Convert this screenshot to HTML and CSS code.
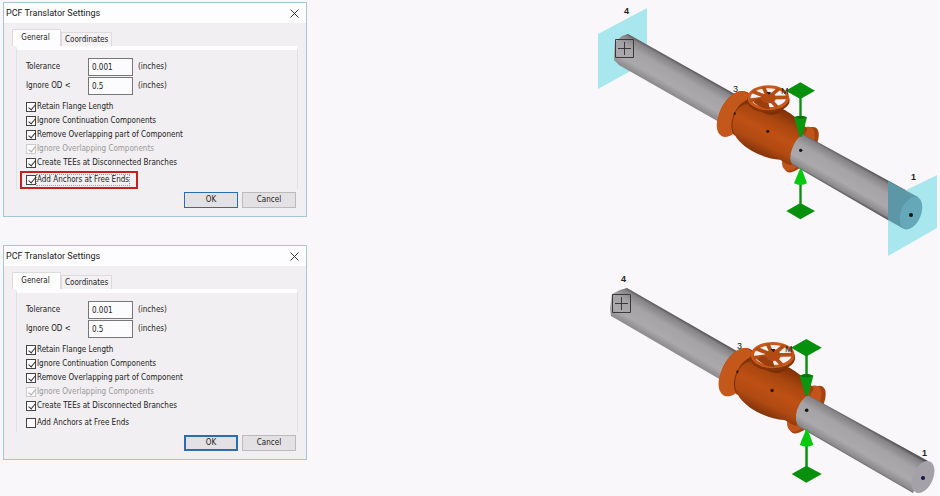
FILE: index.html
```html
<!DOCTYPE html>
<html lang="en">
<head>
    <meta charset="UTF-8">
    <meta name="viewport" content="width=device-width, initial-scale=1.0">
    <title>PCF Translator Settings</title>
    <link rel="stylesheet" href="styles.css">
</head>
<body>
    <!-- anchors on -->
    <section class="row">
        <form class="dialog">
            <header class="titlebar">
                <h2>PCF Translator Settings</h2>
                <button type="button" class="close" aria-label="Close">
                    <svg width="9" height="9" viewBox="0 0 9 9"><path d="M.5.5l8 8M8.500.5l-8 8"/></svg>
                </button>
            </header>
            <div class="tabs">
                <button type="button" class="tab active">General</button>
                <button type="button" class="tab">Coordinates</button>
            </div>
            <div class="panel">
                <div class="field">
                    <label for="tol1">Tolerance</label>
                    <input type="text" id="tol1" value="0.001">
                    <span>(inches)</span>
                </div>
                <div class="field">
                    <label for="od1">Ignore OD &lt;</label>
                    <input type="text" id="od1" value="0.5">
                    <span>(inches)</span>
                </div>
                <div class="checks">
                    <label><input type="checkbox" checked>Retain Flange Length</label>
                    <label><input type="checkbox" checked>Ignore Continuation Components</label>
                    <label><input type="checkbox" checked>Remove Overlapping part of Component</label>
                    <label class="off"><input type="checkbox" checked disabled>Ignore Overlapping Components</label>
                    <label><input type="checkbox" checked>Create TEEs at Disconnected Branches</label>
                    <label class="anchors marked"><input type="checkbox" checked><span>Add Anchors at Free Ends</span></label>
                </div>
            </div>
            <footer class="buttons">
                <button type="button" class="btn ok">OK</button>
                <button type="button" class="btn">Cancel</button>
            </footer>
        </form>

        <svg class="scene" width="350" height="243" viewBox="590 0 350 243">
            <defs>
                <linearGradient id="pipe1" gradientUnits="userSpaceOnUse" x1="628" y1="33" x2="611" y2="63">
                    <stop offset="0" stop-color="#4e4c4e"/>
                    <stop offset=".1" stop-color="#858385"/>
                    <stop offset=".35" stop-color="#a5a3a5"/>
                    <stop offset=".7" stop-color="#aba9ab"/>
                    <stop offset=".92" stop-color="#8c8a8c"/>
                    <stop offset="1" stop-color="#504e50"/>
                </linearGradient>
                <linearGradient id="pipe2" href="#pipe1" x1="627" y1="287" x2="609" y2="318"/>
                <linearGradient id="body" gradientUnits="userSpaceOnUse" x1="235" y1="110" x2="165" y2="255">
                    <stop offset="0" stop-color="#7d3008"/>
                    <stop offset=".25" stop-color="#a8460f"/>
                    <stop offset=".5" stop-color="#be5014"/>
                    <stop offset=".75" stop-color="#b04a12"/>
                    <stop offset="1" stop-color="#7a2f08"/>
                </linearGradient>
                <symbol id="valve" viewBox="0 0 420 480">
                    <!-- flanges -->
                    <ellipse cx="107" cy="128" rx="44" ry="71" transform="rotate(30 107 128)" fill="#a9430d"/>
                    <ellipse cx="100" cy="132" rx="40" ry="75" transform="rotate(28 100 132)" fill="#c3581a"/>
                    <ellipse cx="304" cy="239" rx="34" ry="79" transform="rotate(34 304 239)" fill="#a5430f"/>
                    <ellipse cx="295" cy="236" rx="34" ry="75" transform="rotate(32 295 236)" fill="#c0541a"/>
                    <path d="M102 196C90 175 92 150 104 128C114 107 126 96 145 88L165 130L125 200Z" fill="#823409"/>
                    <!-- body -->
                    <path d="M106 130C118 98 160 92 205 103C252 110 295 145 322 178L274 285C262 284 252 276 240 269C190 265 137 240 110 204C92 178 96 150 106 130Z" fill="url(#body)"/>
                    <!-- hand wheel -->
                    <path d="M170 110C180 128 225 132 248 112L240 127C220 140 190 136 170 110Z" fill="#7b2e07"/>
                    <ellipse cx="205" cy="91" rx="60" ry="33" fill="none" stroke="#853308" stroke-width="8"/>
                    <ellipse cx="205" cy="83" rx="58" ry="33" fill="#f6f1f0" stroke="#c9591b" stroke-width="9"/>
                    <path d="M205 83L190 51M205 83L238 55M205 83L262 82M205 83L232 112M205 83L183 112M205 83L150 91M205 83L157 64" stroke="#b44e17" stroke-width="11"/>
                    <path d="M160 96C180 112 196 118 210 117L205 98L175 84Z" fill="#9c3f0d"/>
                    <ellipse cx="206" cy="84" rx="22" ry="16" fill="#b34a13"/>
                    <path d="M199 66h14l-6 9zM103 126l5 3-3 7-5-3z" fill="#2d1b18"/>
                    <circle cx="203" cy="184" r="5" fill="#32180c"/>
                </symbol>
                <symbol id="support" viewBox="0 0 420 480">
                    <g fill="#07900c">
                        <path d="M257 62L301 37L345 62L301 87Z"/>
                        <path d="M259 423L301 399L345 423L301 448Z"/>
                        <path d="M298 75h7v70h-7zM298 338h7v70h-7z"/>
                    </g>
                    <path d="M282 142Q301 132 321 142L306 200H299Z" fill="#0b9612"/>
                    <path d="M282 142Q301 132 321 142Q302 152 282 142Z" fill="#067309"/>
                    <path d="M300 296H305L321 340Q302 350 282 340Z" fill="#05c90e"/>
                    <circle cx="302" cy="241" r="5" fill="#111"/>
                </symbol>
            </defs>
            <path d="M598 34L647 8V62L598 89Z" fill="#a7e7ed"/>
            <path d="M628 34L742 98L728 127L619 65L614 60V52L615 42L622 36Z" fill="url(#pipe1)"/>
            <path class="cursor" d="M615.500 39.500h18v18h-18zM624.500 42v13M618 48.500h13"/>
            <use href="#valve" x="700" y="70" width="140" height="160"/>
            <path d="M803 134L920 198L905 230L793 165Q788 160 792 149Q796 138 803 134Z" fill="url(#pipe1)"/>
            <path d="M888 199L937 175V228L888 256Z" fill="#a7e7ed"/>
            <path d="M888 181L918 197Q924 211 916 223Q909 231 904 229L888 220Z" fill="#5b97a6"/>
            <ellipse cx="911" cy="213" rx="10" ry="17" transform="rotate(22 911 213)" fill="#65a8b8"/>
            <circle cx="911" cy="215" r="2" fill="#111"/>
            <use href="#support" x="700" y="70" width="140" height="160"/>
            <text x="624" y="14">4</text>
            <text x="733" y="92" class="thin">3</text>
            <text x="781" y="94" class="thin">M</text>
            <text x="911" y="180">1</text>
        </svg>
    </section>

    <!-- anchors off -->
    <section class="row">
        <form class="dialog">
            <header class="titlebar">
                <h2>PCF Translator Settings</h2>
                <button type="button" class="close" aria-label="Close">
                    <svg width="9" height="9" viewBox="0 0 9 9"><path d="M.5.5l8 8M8.500.5l-8 8"/></svg>
                </button>
            </header>
            <div class="tabs">
                <button type="button" class="tab active">General</button>
                <button type="button" class="tab">Coordinates</button>
            </div>
            <div class="panel">
                <div class="field">
                    <label for="tol2">Tolerance</label>
                    <input type="text" id="tol2" value="0.001">
                    <span>(inches)</span>
                </div>
                <div class="field">
                    <label for="od2">Ignore OD &lt;</label>
                    <input type="text" id="od2" value="0.5">
                    <span>(inches)</span>
                </div>
                <div class="checks">
                    <label><input type="checkbox" checked>Retain Flange Length</label>
                    <label><input type="checkbox" checked>Ignore Continuation Components</label>
                    <label><input type="checkbox" checked>Remove Overlapping part of Component</label>
                    <label class="off"><input type="checkbox" checked disabled>Ignore Overlapping Components</label>
                    <label><input type="checkbox" checked>Create TEEs at Disconnected Branches</label>
                    <label class="anchors"><input type="checkbox"><span>Add Anchors at Free Ends</span></label>
                </div>
            </div>
            <footer class="buttons">
                <button type="button" class="btn ok strong">OK</button>
                <button type="button" class="btn">Cancel</button>
            </footer>
        </form>

        <svg class="scene" width="350" height="253" viewBox="590 243 350 253">
            <path d="M627 288L742 354L728 384L618 320L611 316L610 308L612 294L620 290Z" fill="url(#pipe2)"/>
            <path class="cursor" d="M612.500 294.500h18v18h-18zM621.500 297v13M615 303.500h13"/>
            <use href="#valve" x="701" y="326" width="147" height="168"/>
            <path d="M808 395L928 461L913 493L799 427Q794 421 797 410Q801 399 808 395Z" fill="url(#pipe2)"/>
            <ellipse cx="923" cy="477" rx="10" ry="17" transform="rotate(24 923 477)" fill="#a4a2a8"/>
            <circle cx="923" cy="478" r="2" fill="#15153c"/>
            <use href="#support" x="701" y="326" width="147" height="168"/>
            <text x="621" y="282">4</text>
            <text x="737" y="349" class="thin">3</text>
            <text x="785" y="352" class="thin">M</text>
            <text x="922" y="456">1</text>
        </svg>
    </section>
</body>
</html>
```

FILE: styles.css
```css
* {
    box-sizing: border-box;
}
body {
    margin: 0;
    background: #f9f7f9;
    color: #222;
    font: 8px/12px "DejaVu Sans Condensed", "Open Sans", sans-serif;
}
.row {
    display: flex;
    justify-content: space-between;
    align-items: flex-start;
}
.dialog {
    width: 304px;
    margin: 2px 0 0 3px;
    border: 1px solid #a5c6d6;
    background: #f1eff1;
    white-space: nowrap;
}
.titlebar {
    display: flex;
    justify-content: space-between;
    align-items: center;
    height: 20px;
    padding: 0 7px 0 2px;
    background: #fdfcfe;
}
h2 {
    margin: 0;
    font: 9px/12px Roboto, "Open Sans", sans-serif;
}
button {
    padding: 0;
    color: #222;
    font: inherit;
}
.close {
    display: flex;
    border: none;
    background: none;
}
.close path {
    stroke: #333;
    stroke-width: 1;
}
.tabs {
    display: flex;
    align-items: flex-end;
    margin: 6px 0 0 8px;
}
.tab {
    height: 14px;
    padding: 0 3px;
    border: 1px solid #dddbdd;
    border-bottom: none;
    background: #f3f1f3;
}
.tab.active {
    width: 49px;
    height: 17px;
    padding: 0 5px 0 3px;
    background: #fdfcfe;
}
.panel {
    height: 143px;
    margin: 0 8px 0 12px;
    padding: 8px 5px 0;
    border: 1px solid #e2e0e2;
    border-top: 4px solid #fdfcfe;
    border-bottom: none;
}
.field {
    display: flex;
    align-items: center;
    gap: 5px;
    height: 18px;
    margin: 0 0 1px 4px;
}
.field label {
    width: 57px;
}
.field input {
    width: 45px;
    height: 18px;
    padding: 0 3px;
    border: 1px solid #777;
    background: #fcfbfd;
    color: #222;
    font: inherit;
}
.checks {
    margin-top: 5px;
}
.checks label {
    display: flex;
    align-items: center;
    gap: 1px;
    height: 14px;
    padding-left: 4px;
}
.checks input {
    appearance: none;
    flex: none;
    width: 10px;
    height: 10px;
    margin: 0;
    border: 1px solid #444;
    background: #fcfbfd;
}
.checks input:checked::before {
    content: "";
    display: block;
    width: 3px;
    height: 6px;
    margin: 0 0 0 3px;
    border: solid #333;
    border-width: 0 1px 1px 0;
    transform: rotate(40deg);
}
.checks .off {
    color: #999;
}
.checks .off input {
    border-color: #ccc;
}
.checks .off input::before {
    border-color: #aaa;
}
.checks .anchors {
    width: 118px;
    height: 18px;
    margin: 1px 0 0 -2px;
    border: 2px solid transparent;
}
.checks .marked {
    border-color: #c4201e;
}
.marked span {
    outline: 1px dotted #999;
    line-height: 10px;
}
.buttons {
    display: flex;
    justify-content: flex-end;
    gap: 4px;
    margin-top: 3px;
    padding: 0 10px 8px 0;
}
.btn {
    width: 54px;
    height: 16px;
    border: 1px solid #bbb;
    background: #e3e1e3;
    line-height: 12px;
}
.btn.ok {
    border-color: #2a6db0;
}
.btn.strong {
    border-width: 2px;
    line-height: 10px;
}
.scene {
    display: block;
    overflow: visible;
    font: bold 9px "Liberation Sans", sans-serif;
    fill: #222;
}
.scene .thin {
    font-weight: normal;
}
.scene .cursor {
    fill: none;
    stroke: #3a383a;
    stroke-width: 1;
}
```
